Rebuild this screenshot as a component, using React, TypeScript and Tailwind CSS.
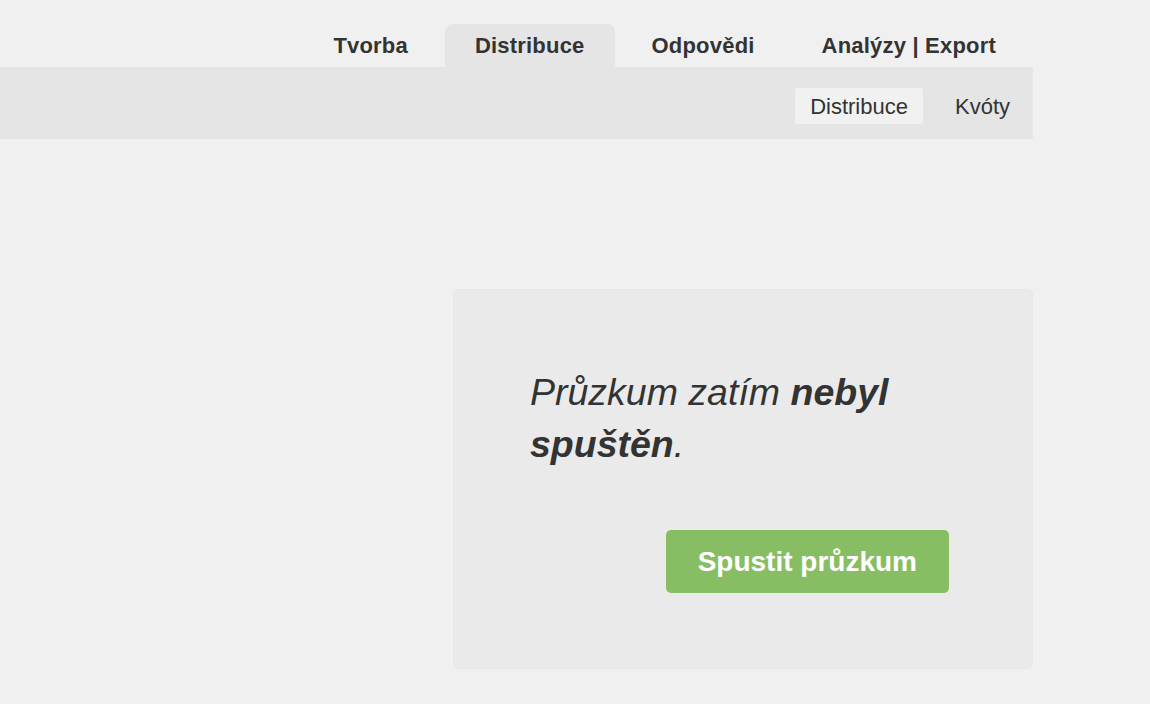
const tabs = ["Tvorba", "Distribuce", "Odpovědi", "Analýzy | Export"];
const subTabs = ["Distribuce", "Kvóty"];

export default function App() {
  const activeTab = "Distribuce";
  const activeSub = "Distribuce";

  return (
    <div className="min-h-[704px] w-full bg-[#f0f0f0] font-['Liberation_Sans',Arial,sans-serif] text-[#333333]">
      <div className="w-[1033px]">
        {/* main tabs */}
        <nav className="flex justify-end gap-[7px] pt-[24px] pr-[7px]">
          {tabs.map((tab) => (
            <button
              key={tab}
              className={`rounded-t-[8px] px-[30px] py-[9px] text-[22px] font-bold leading-[25px] tracking-[0.2px] ${
                tab === activeTab ? "bg-[#e5e5e5]" : ""
              }`}
            >
              {tab}
            </button>
          ))}
        </nav>

        {/* sub tabs */}
        <div className="flex h-[72px] justify-end gap-[17px] bg-[#e5e5e5] pt-[21px] pr-[8px]">
          {subTabs.map((tab) => (
            <button
              key={tab}
              className={`flex h-[36px] items-center rounded-[3px] px-[15px] text-[22px] leading-[25px] ${
                tab === activeSub ? "bg-[#f1f1f1]" : ""
              }`}
            >
              {tab}
            </button>
          ))}
        </div>

        {/* status card */}
        <div className="mt-[150px] flex justify-end">
          <div className="w-[580px] rounded-[6px] border border-[#e4e7eb] bg-[#eaeaea] pt-[76px] pb-[75px] pl-[76px] pr-[83px]">
            <p className="text-[37.5px] italic leading-[52px]">
              Průzkum zatím <b>nebyl spuštěn</b>.
            </p>
            <div className="mt-[60px] flex justify-end">
              <button className="h-[63px] rounded-[5px] bg-[#88be63] px-[32px] text-[28px] font-bold text-white">
                Spustit průzkum
              </button>
            </div>
          </div>
        </div>
      </div>
    </div>
  );
}
